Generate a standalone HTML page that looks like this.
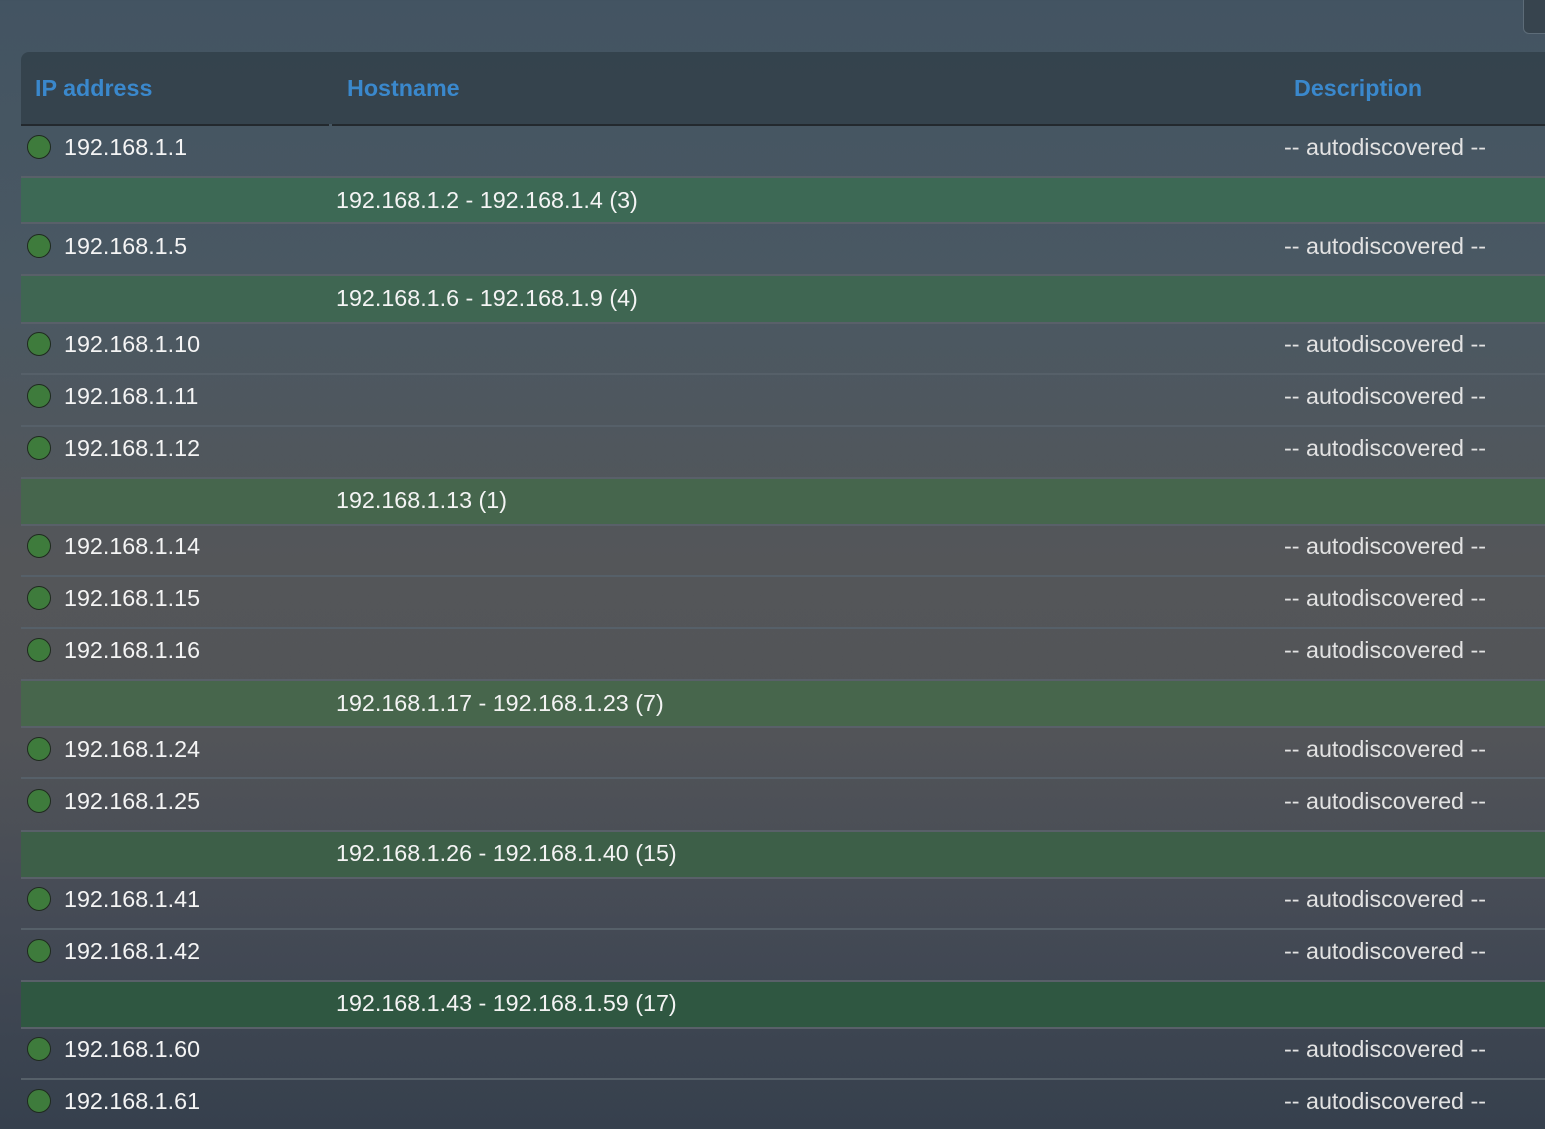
<!DOCTYPE html>
<html><head><meta charset="utf-8"><style>
html,body{margin:0;padding:0;width:1545px;height:1129px;overflow:hidden;}
body{background:linear-gradient(180deg,#435462 0%,#4a5863 25%,#545659 50%,#525458 65%,#444a55 82%,#36404d 100%);font-family:"Liberation Sans",sans-serif;position:relative;}
.hdr{position:absolute;left:21px;top:52px;width:1540px;height:72px;background:rgba(40,52,60,0.55);border-top-left-radius:8px;}
.hb{position:absolute;top:124px;height:2px;background:#23292e;}
.h{position:absolute;top:75px;color:#3a88cc;font-weight:bold;font-size:23.3px;line-height:26px;}
.band{position:absolute;left:21px;width:1530px;border-top:2px solid #596069;border-bottom:2px solid #596069;}
.line{position:absolute;left:21px;width:1530px;height:2px;background:#566069;}
.t{position:absolute;font-size:23.3px;line-height:26px;color:#f4f4f4;white-space:nowrap;}
.d{position:absolute;left:1284px;font-size:23.3px;line-height:26px;color:#e2e2e2;white-space:nowrap;}
.c{position:absolute;left:27px;width:22px;height:22px;border-radius:50%;background:#3e7b3c;border:1px solid #1e2a1e;}
.box{position:absolute;left:1523px;top:-5px;width:40px;height:37px;border:1px solid #5d6c78;border-radius:6px;background:#37444e;}
</style></head><body>
<div class="box"></div>
<div class="hdr"></div>
<div class="hb" style="left:21px;width:308px"></div>
<div class="hb" style="left:332px;width:945px"></div>
<div class="hb" style="left:1277px;width:268px"></div>
<div class="h" style="left:35px">IP address</div>
<div class="h" style="left:347px">Hostname</div>
<div class="h" style="left:1294px">Description</div>

<div class="band" style="top:176px;height:44px;background:#3d6955"></div>
<div class="band" style="top:274px;height:46px;background:#3f6652"></div>
<div class="band" style="top:477px;height:45px;background:#46664d"></div>
<div class="band" style="top:679px;height:45px;background:#47664c"></div>
<div class="band" style="top:830px;height:45px;background:#3d5f48"></div>
<div class="band" style="top:980px;height:45px;background:#2f5741"></div>

<div class="line" style="top:373px"></div>
<div class="line" style="top:425px"></div>
<div class="line" style="top:575px"></div>
<div class="line" style="top:627px"></div>
<div class="line" style="top:777px"></div>
<div class="line" style="top:928px"></div>
<div class="line" style="top:1078px"></div>

<div class="c" style="top:135px"></div><div class="t" style="left:64px;top:134px">192.168.1.1</div><div class="d" style="top:134px">-- autodiscovered --</div>
<div class="t" style="left:336px;top:187px">192.168.1.2 - 192.168.1.4 (3)</div>
<div class="c" style="top:234px"></div><div class="t" style="left:64px;top:233px">192.168.1.5</div><div class="d" style="top:233px">-- autodiscovered --</div>
<div class="t" style="left:336px;top:285px">192.168.1.6 - 192.168.1.9 (4)</div>
<div class="c" style="top:332px"></div><div class="t" style="left:64px;top:331px">192.168.1.10</div><div class="d" style="top:331px">-- autodiscovered --</div>
<div class="c" style="top:384px"></div><div class="t" style="left:64px;top:383px">192.168.1.11</div><div class="d" style="top:383px">-- autodiscovered --</div>
<div class="c" style="top:436px"></div><div class="t" style="left:64px;top:435px">192.168.1.12</div><div class="d" style="top:435px">-- autodiscovered --</div>
<div class="t" style="left:336px;top:487px">192.168.1.13 (1)</div>
<div class="c" style="top:534px"></div><div class="t" style="left:64px;top:533px">192.168.1.14</div><div class="d" style="top:533px">-- autodiscovered --</div>
<div class="c" style="top:586px"></div><div class="t" style="left:64px;top:585px">192.168.1.15</div><div class="d" style="top:585px">-- autodiscovered --</div>
<div class="c" style="top:638px"></div><div class="t" style="left:64px;top:637px">192.168.1.16</div><div class="d" style="top:637px">-- autodiscovered --</div>
<div class="t" style="left:336px;top:690px">192.168.1.17 - 192.168.1.23 (7)</div>
<div class="c" style="top:737px"></div><div class="t" style="left:64px;top:736px">192.168.1.24</div><div class="d" style="top:736px">-- autodiscovered --</div>
<div class="c" style="top:789px"></div><div class="t" style="left:64px;top:788px">192.168.1.25</div><div class="d" style="top:788px">-- autodiscovered --</div>
<div class="t" style="left:336px;top:840px">192.168.1.26 - 192.168.1.40 (15)</div>
<div class="c" style="top:887px"></div><div class="t" style="left:64px;top:886px">192.168.1.41</div><div class="d" style="top:886px">-- autodiscovered --</div>
<div class="c" style="top:939px"></div><div class="t" style="left:64px;top:938px">192.168.1.42</div><div class="d" style="top:938px">-- autodiscovered --</div>
<div class="t" style="left:336px;top:990px">192.168.1.43 - 192.168.1.59 (17)</div>
<div class="c" style="top:1037px"></div><div class="t" style="left:64px;top:1036px">192.168.1.60</div><div class="d" style="top:1036px">-- autodiscovered --</div>
<div class="c" style="top:1089px"></div><div class="t" style="left:64px;top:1088px">192.168.1.61</div><div class="d" style="top:1088px">-- autodiscovered --</div>
</body></html>
